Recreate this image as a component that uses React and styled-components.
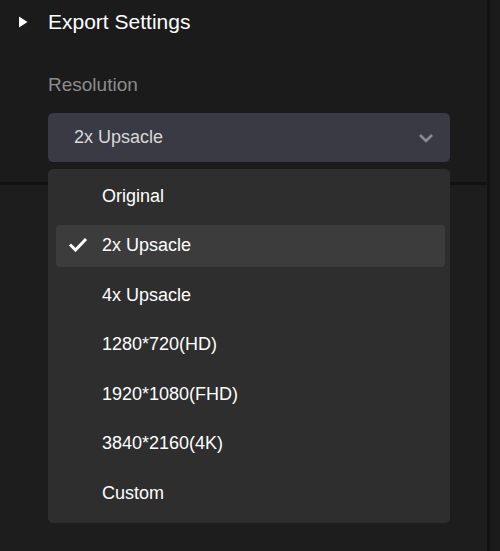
import React from "react";
import styled, { createGlobalStyle } from "styled-components";

const G = createGlobalStyle`
  html,body{margin:0;padding:0;background:#1b1b1b;}
  body{font-family:"Segoe UI","Liberation Sans",Arial,sans-serif;}
`;
const Page = styled.div`display:flex;width:500px;height:551px;overflow:hidden;`;
const Panel = styled.div`width:487px;border-right:3px solid #121212;display:flex;flex-direction:column;position:relative;`;
const Top = styled.div`height:185px;background:#1b1b1b;border-bottom:3px solid #111;box-sizing:border-box;padding:10px 0 0 0;`;
const Bottom = styled.div`flex:1;background:#1d1d1d;`;
const Header = styled.div`display:flex;align-items:center;height:24px;padding-left:18px;gap:20px;color:#fff;font-size:21px;`;
const Label = styled.div`color:#8c8c8c;font-size:19px;margin:40px 0 0 48px;`;
const Select = styled.div`margin:17px 0 0 48px;width:402px;height:49px;box-sizing:border-box;background:#3a3a44;border-radius:5px;display:flex;align-items:center;justify-content:space-between;padding:0 16px 0 26px;color:#d8d8d8;font-size:18px;`;
const Menu = styled.div`position:absolute;left:48px;top:169px;width:402px;height:354px;background:#2e2e2e;border-radius:5px;padding:6px 5px 0 8px;box-sizing:border-box;display:flex;flex-direction:column;`;
const Item = styled.div`height:42px;margin-bottom:7.6px;border-radius:4px;display:flex;align-items:center;padding-left:46px;position:relative;color:#fff;font-size:18px;background:${p=>p.sel?"#3c3c3c":"transparent"};`;
const Check = styled.svg`position:absolute;left:12px;top:12px;`;
const items=["Original","2x Upsacle","4x Upsacle","1280*720(HD)","1920*1080(FHD)","3840*2160(4K)","Custom"];
export default function App(){
  return <Page><G/><Panel>
    <Top>
      <Header><svg width="10" height="12" viewBox="0 0 10 12"><path d="M1 0.5L9.5 6 1 11.5z" fill="#fff"/></svg>Export Settings</Header>
      <Label>Resolution</Label>
      <Select>2x Upsacle<svg width="16" height="10" viewBox="0 0 16 10"><path d="M2 2l6 6 6-6" stroke="#8a8a94" strokeWidth="2.6" fill="none"/></svg></Select>
    </Top>
    <Bottom/>
    <Menu>{items.map((t,i)=><Item key={t} sel={i===1}>{i===1&&<Check width="20" height="15" viewBox="0 0 20 15"><path d="M2 7.5l5.5 5.5L18 2" stroke="#fff" strokeWidth="3" fill="none"/></Check>}{t}</Item>)}</Menu>
  </Panel></Page>;
}
